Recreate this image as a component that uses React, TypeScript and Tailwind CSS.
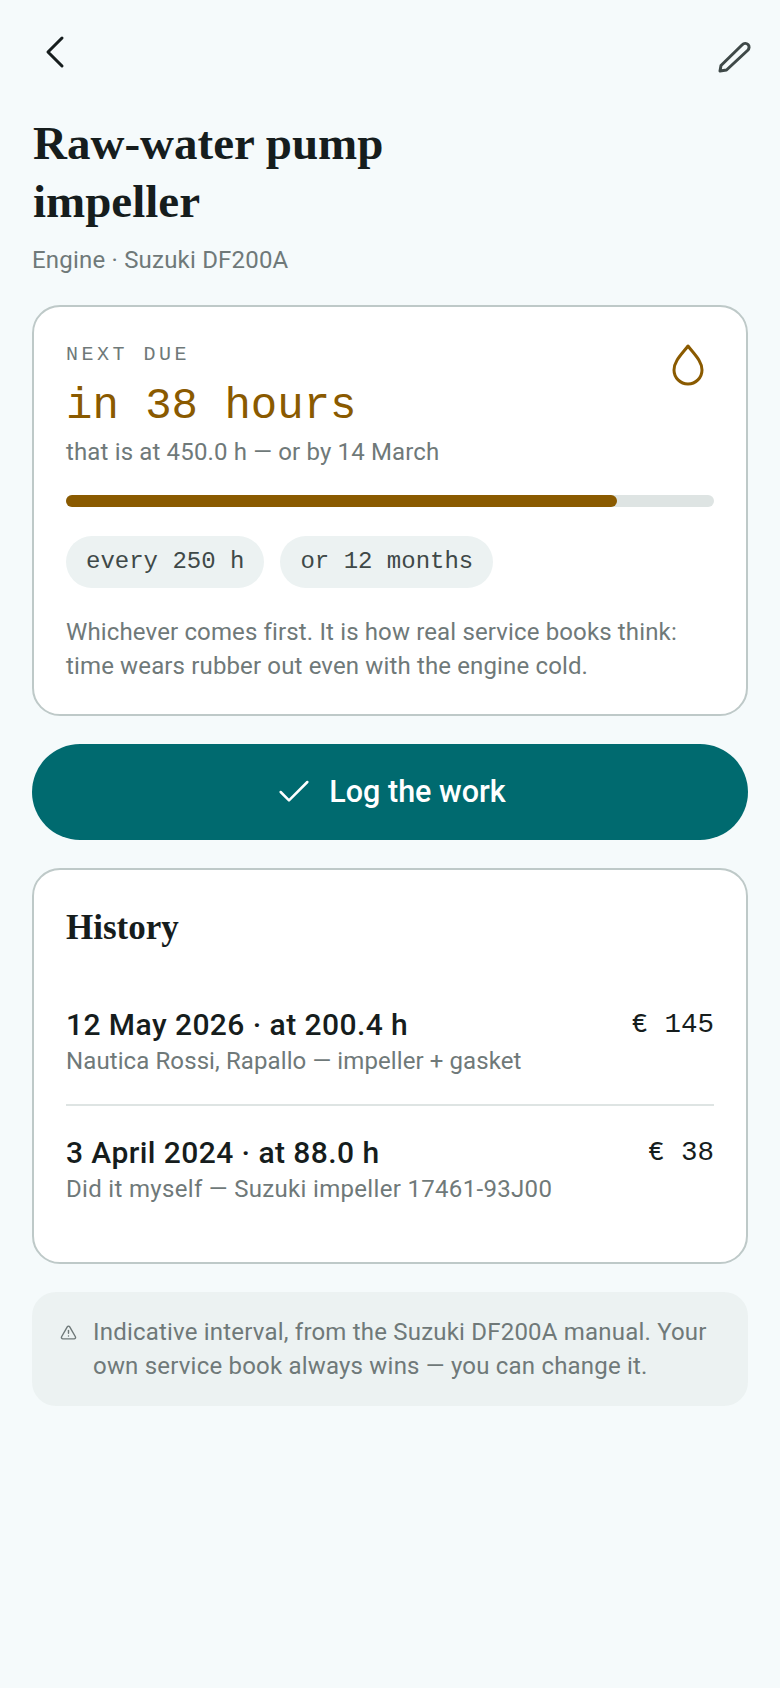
import { Check, ChevronLeft, TriangleAlert } from 'lucide-react';

const sans = 'font-["Roboto",sans-serif]';
const mono = 'font-["Liberation_Mono",monospace]';
const serif = 'font-["Liberation_Serif",serif]';

function HistoryRow({ title, sub, cost, subClass }: { title: string; sub: string; cost: string; subClass: string }) {
    return (
        <div className="flex justify-between items-start">
            <div>
                <div className="text-[30px] leading-[36px] tracking-[0.43px] font-medium text-[#161d1d]">{title}</div>
                <div className={`${subClass} text-[24px] leading-[32px] text-[#6f7979] mt-0.5`}>{sub}</div>
            </div>
            <div className={`${mono} text-[27.5px] leading-[36px] text-[#161d1d] whitespace-pre`}>{cost}</div>
        </div>
    );
}

export default function App() {
    return (
        <div className={`${sans} min-h-[1688px] bg-[#f5fafb] px-8`}>
            {/* Top bar */}
            <div className="flex justify-between items-start pt-[24px] h-[92px]">
                <ChevronLeft className="w-14 h-14 text-[#161d1d] -ml-[5px]" strokeWidth={1.3} />
                <svg className="w-9 h-9 mt-[14px] -mr-1 text-[#3f4948]" viewBox="0 0 36 36" fill="none" stroke="currentColor" strokeWidth="3" strokeLinejoin="round">
                    <path d="M4 33 L5 27.5 L26 7 C28 5 30.5 5 32 6.5 C33.5 8 33.5 10.5 31.5 12.5 L10.5 32 Z" />
                </svg>
            </div>

            {/* Title */}
            <h1 className={`${serif} mt-[22px] ml-[1px] text-[47px] leading-[58px] font-bold text-[#161d1d] w-[400px]`}>
                Raw-water pump impeller
            </h1>
            <p className="mt-[14px] text-[24px] leading-[32px] tracking-[0.2px] text-[#6f7979]">Engine · Suzuki DF200A</p>

            {/* Next due */}
            <div className="mt-[29px] bg-white border-2 border-[#bec9c8] rounded-[28px] px-8 pt-[35px] pb-[31px] relative">
                <svg className="absolute right-[40px] top-[36px] w-9 h-[46px] text-[#8a5a00]" viewBox="0 0 36 46" fill="none" stroke="currentColor" strokeWidth="3" strokeLinejoin="round">
                    <path d="M18 3 C24 11 32 18 32 27 A14 14 0 0 1 4 27 C4 18 12 11 18 3 Z" />
                </svg>
                <div className={`${mono} text-[20px] leading-[26px] tracking-[3.5px] text-[#6f7979]`}>NEXT DUE</div>
                <div className={`${mono} text-[44px] leading-[56px] text-[#8a5a00] mt-[10px]`}>in 38 hours</div>
                <div className="text-[24px] leading-[32px] tracking-[0.15px] text-[#6f7979] mt-[2px]">that is at 450.0 h — or by 14 March</div>
                <div className="mt-[27px] h-3 rounded-full bg-[#dee4e3]">
                    <div className="h-3 rounded-full bg-[#8a5a00] w-[85%]" />
                </div>
                <div className="flex gap-4 mt-[29px]">
                    <span className={`${mono} bg-[#ecf2f2] rounded-full px-5 h-[52px] flex items-center text-[24px] text-[#3f4948]`}>every 250 h</span>
                    <span className={`${mono} bg-[#ecf2f2] rounded-full px-5 h-[52px] flex items-center text-[24px] text-[#3f4948]`}>or 12 months</span>
                </div>
                <p className="mt-[27px] text-[24px] leading-[34px] tracking-[0.14px] text-[#6f7979]">
                    Whichever comes first. It is how real service books think: time wears rubber out even with the engine cold.
                </p>
            </div>

            {/* Action */}
            <button className="mt-7 w-full h-[96px] rounded-[48px] bg-[#006a6f] text-white flex items-center justify-center gap-[15px] text-[30.5px] font-medium">
                <Check className="w-10 h-10" strokeWidth={1.5} />
                Log the work
            </button>

            {/* History */}
            <div className="mt-7 bg-white border-2 border-[#bec9c8] rounded-[28px] px-8 pt-[36px] pb-[57px]">
                <h2 className={`${serif} text-[35px] leading-[44px] font-bold text-[#161d1d]`}>History</h2>
                <div className="mt-[57px] pb-[27px] border-b-2 border-[#dee4e3]">
                    <HistoryRow title="12 May 2026 · at 200.4 h" sub="Nautica Rossi, Rapallo — impeller + gasket" cost="€ 145" subClass="tracking-[0.1px]" />
                </div>
                <div className="mt-[29px]">
                    <HistoryRow title="3 April 2024 · at 88.0 h" sub="Did it myself — Suzuki impeller 17461-93J00" cost="€ 38" subClass="tracking-[0.32px]" />
                </div>
            </div>

            {/* Disclaimer */}
            <div className="mt-7 bg-[#ecf2f2] rounded-[24px] px-7 py-[23px] flex gap-4">
                <TriangleAlert className="w-[17px] h-[17px] mt-[9px] shrink-0 text-[#6f7979]" strokeWidth={2} />
                <p className="text-[24px] leading-[34px] tracking-[0.2px] text-[#6f7979]">
                    Indicative interval, from the Suzuki DF200A manual. Your own service book always wins — you can change it.
                </p>
            </div>
        </div>
    );
}
